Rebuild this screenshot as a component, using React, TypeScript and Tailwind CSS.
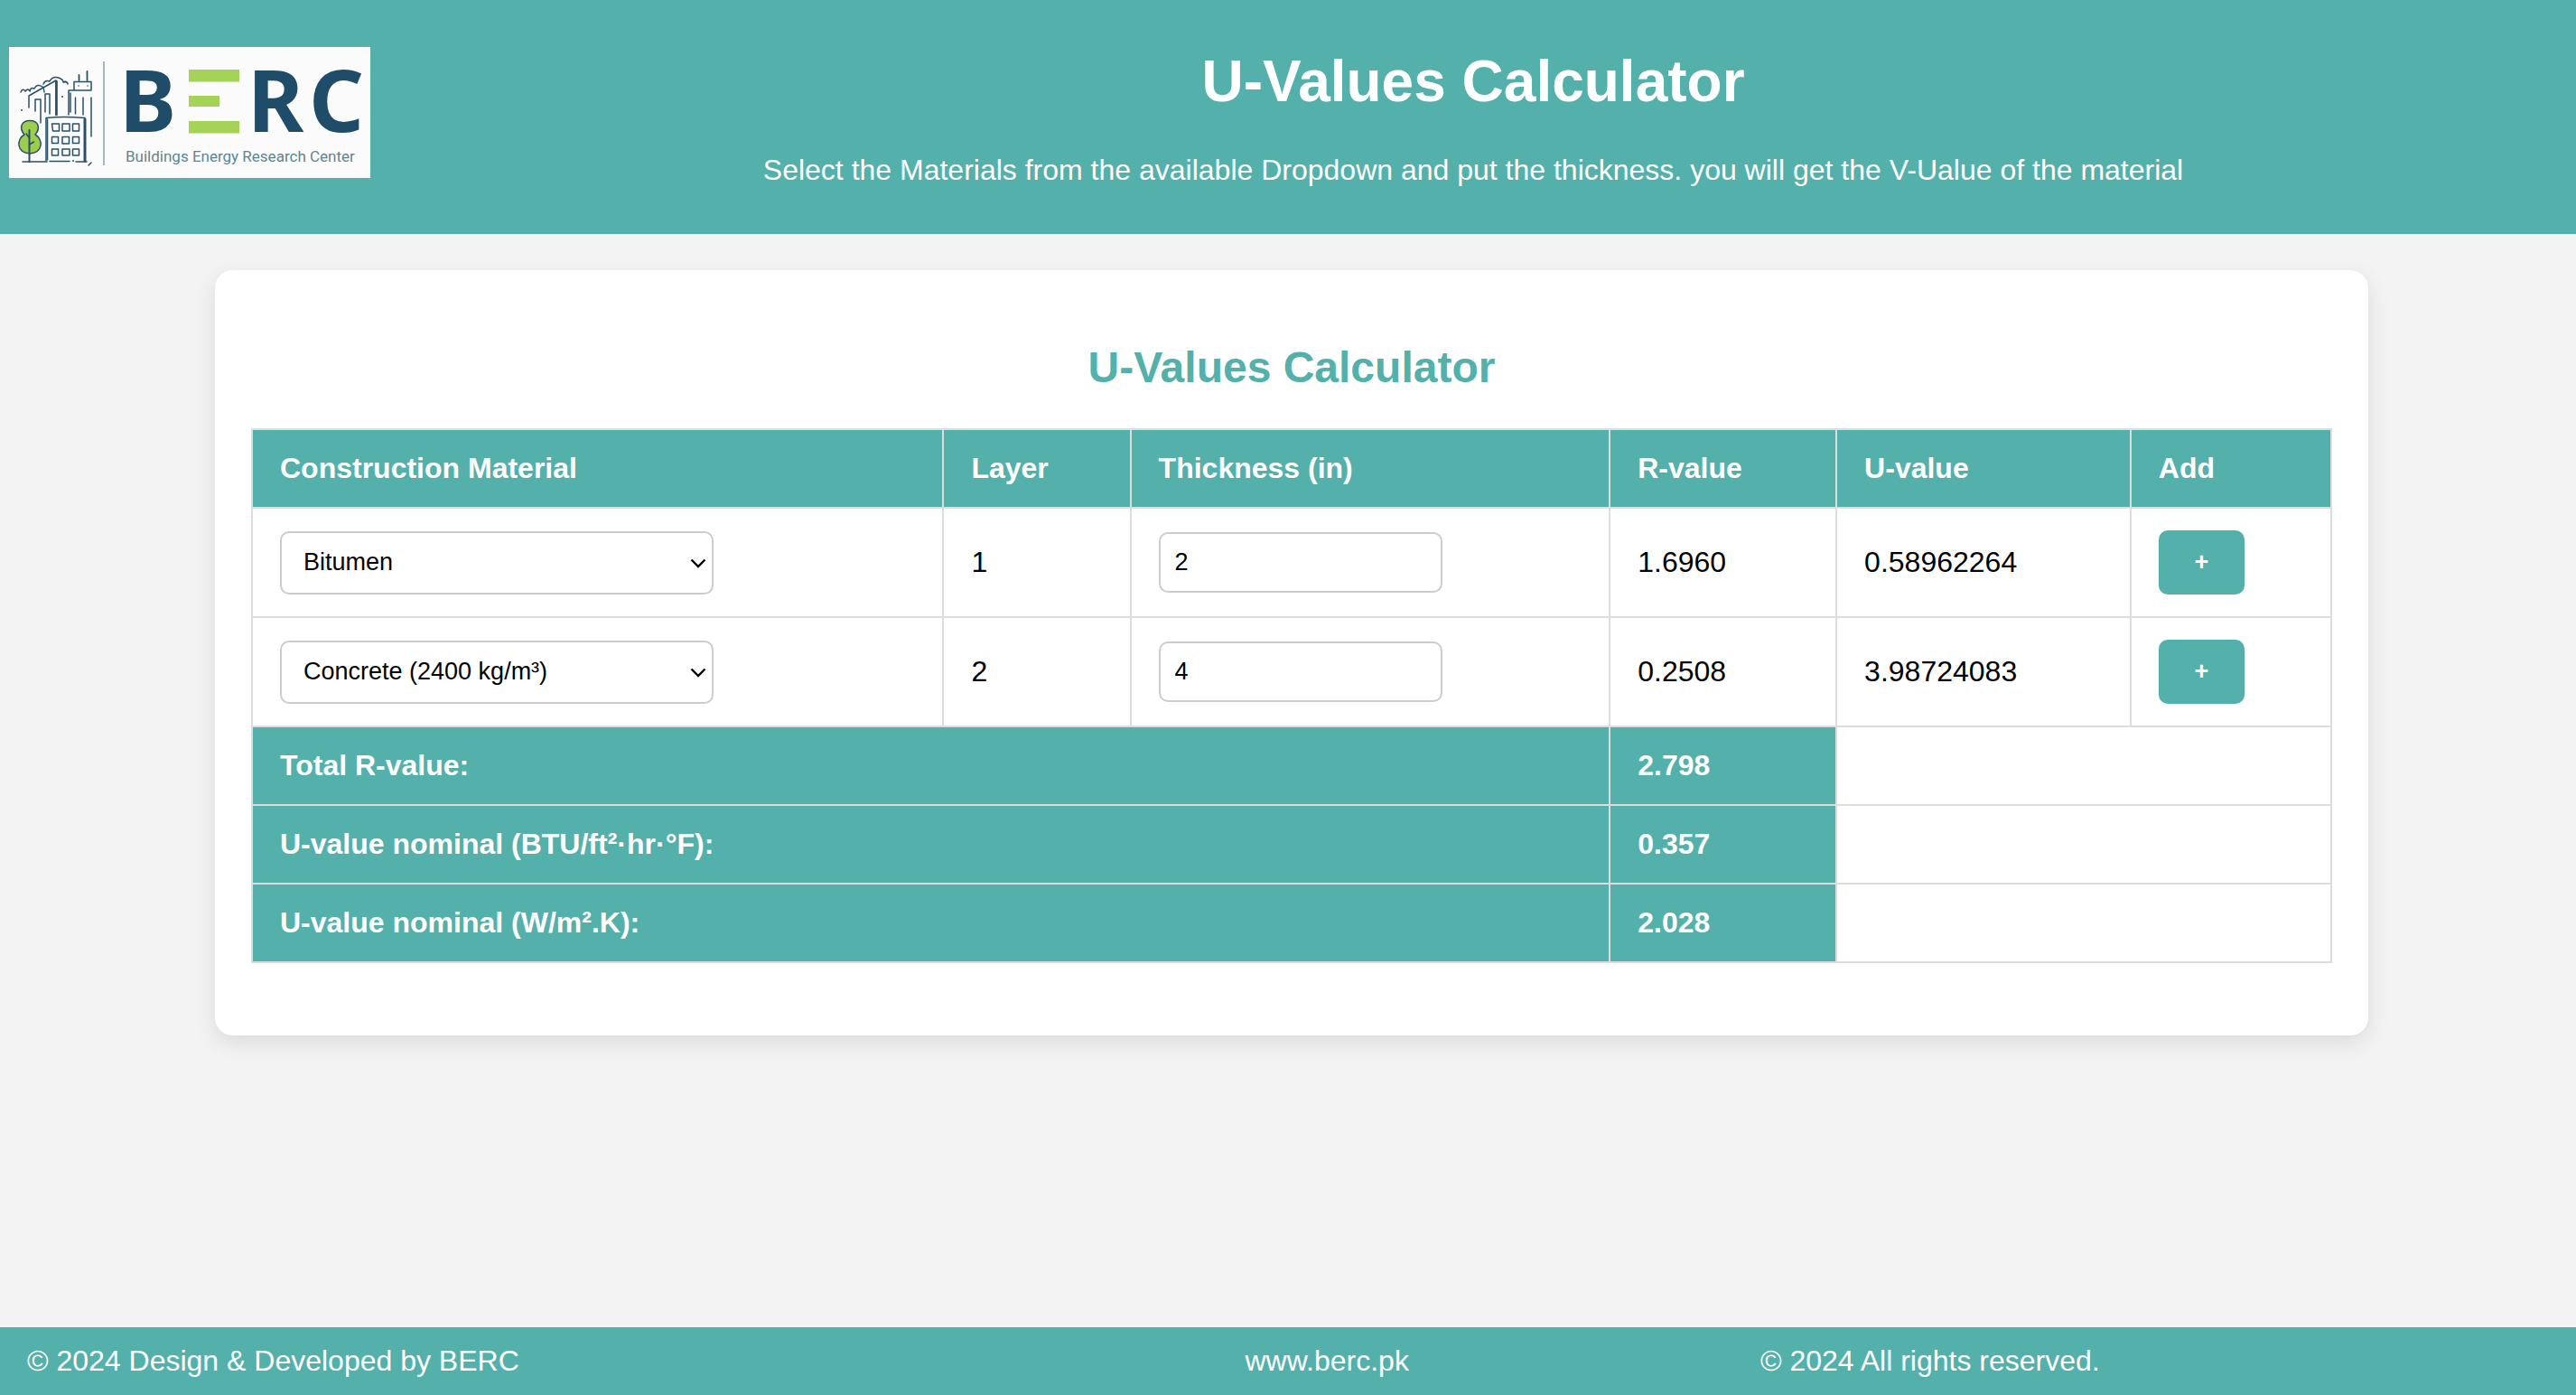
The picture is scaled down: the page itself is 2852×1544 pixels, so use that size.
import { useState } from "react";

const MATERIALS = ["Bitumen", "Concrete (2400 kg/m³)"];

type Row = { material: string; thickness: string; r: string; u: string };

const INITIAL_ROWS: Row[] = [
  { material: "Bitumen", thickness: "2", r: "1.6960", u: "0.58962264" },
  { material: "Concrete (2400 kg/m³)", thickness: "4", r: "0.2508", u: "3.98724083" },
];

const TOTALS = [
  { label: "Total R-value:", value: "2.798" },
  { label: "U-value nominal (BTU/ft²·hr·°F):", value: "0.357" },
  { label: "U-value nominal (W/m².K):", value: "2.028" },
];

const HEADINGS = ["Construction Material", "Layer", "Thickness (in)", "R-value", "U-value", "Add"];

function Logo() {
  return (
    <svg viewBox="0 0 400 145" role="img" aria-label="BERC" className="block h-auto w-[400px] shrink-0">
      <rect width="400" height="145" fill="#fbfbfc" />
      <g fill="none" stroke="#2a5068" strokeWidth="1.5" strokeLinecap="round" strokeLinejoin="round">
        <path d="M13 50q2-5 5-1q3-4 5 0q1-5 5-3q3-6 9-2q2 2 2 6" />
        <path d="M38 41q2-5 7-3q3-6 10-4q5 2 5 5q4-2 5 2M61 39q3-1 4 1" />
        <path d="M22 67V54L52 37V75" />
        <path d="M52.5 38V75" strokeWidth="2.6" />
        <path d="M29 71V58h6V84M35 60V84M40 72V52h5V74" />
        <path d="M66 75V48H91M68 51V72M72 48V38.500H91V48" />
        <path d="M77.500 37V31M86.500 37V27" strokeWidth="1.8" />
        <path d="M73.500 56V74M82 56V75M91 56V99" />
        <path d="M41 126V78.500Q60 76.500 84 78.500V126" />
        <path d="M42.500 80V125" />
        <path d="M84 80V126" strokeWidth="3" />
        <path d="M15 127h27M45 126.500h22M74 127h12M88 131l3-3" />
        <path d="M47.500 85h8v8h-7zM59 85h8v8h-8zM70.500 85h7v8h-7zM47.500 99.500h7v7h-7zM59 99.500h7.500v7.500h-7.500zM70.500 99.500h7v7h-7zM47.500 113h7v7h-7zM59 113h8v7h-8zM70.500 113h7v7h-7z" />
        <path d="M17 97C11 90 13 81.500 23 81.500S35 90 29 97C38 102 38 117 23 118C8 117 8 102 17 97Z" fill="#9bcd4e" />
        <path d="M22.500 92V127" strokeWidth="2" />
        <path d="M22 100l-3-4M22.500 108l5-3" />
      </g>
      <g fill="#2a5068">
        <circle cx="14" cy="70" r="1" />
        <circle cx="59" cy="55" r="1" />
        <circle cx="77" cy="43" r="0.8" />
        <circle cx="87" cy="43" r="0.8" />
        <circle cx="71" cy="126" r="1" />
      </g>
      <path d="M105 16V131" stroke="#8aa9b5" strokeWidth="1.6" />
      <g fill="#a4d357">
        <rect x="199" y="25" width="56" height="13.5" />
        <rect x="199" y="54" width="34" height="12" />
        <rect x="199" y="82" width="56" height="13.5" />
      </g>
      <g fill="#1f4c68" fontFamily="'Noto Sans', sans-serif" fontWeight="700" fontSize="95">
        <text x="122" y="94">B</text>
        <text x="264" y="94">R</text>
        <text x="332" y="94">C</text>
      </g>
      <text x="129" y="127" fill="#5f8590" fontFamily="Roboto, sans-serif" fontWeight="400" fontSize="17">
        Buildings Energy Research Center
      </text>
    </svg>
  );
}

export default function App() {
  const [rows, setRows] = useState(INITIAL_ROWS);
  const update = (index: number, patch: Partial<Row>) =>
    setRows(rows.map((row, i) => (i === index ? { ...row, ...patch } : row)));
  const addAfter = (index: number) =>
    setRows([...rows.slice(0, index + 1), { ...rows[index] }, ...rows.slice(index + 1)]);

  return (
    <div className="flex min-h-screen flex-col bg-[#f3f3f3] font-['Liberation_Sans',Arial,sans-serif] text-[32px] leading-[37px] text-black">
      <header className="flex items-start bg-[#54b0ab] pt-[52px] pb-[52px] pl-[10px] text-white">
        <div className="-mb-[42px] shrink-0">
          <Logo />
        </div>
        <div className="flex-1 text-center">
          <h1 className="text-[64px] leading-[76px] font-bold">U-Values Calculator</h1>
          <p className="mt-[42px]">
            Select the Materials from the available Dropdown and put the thickness. you will get the V-Ualue of the
            material
          </p>
        </div>
      </header>

      <main className="flex-1 pt-10 pb-10 pl-2">
        <section className="mx-auto w-full max-w-[2384px] rounded-[20px] bg-white px-10 py-20 shadow-[0_8px_24px_rgba(0,0,0,0.1)]">
          <h2 className="mb-10 text-center text-[48px] leading-[55px] font-bold text-[#54b0ab]">U-Values Calculator</h2>
          <table className="w-full table-fixed border-collapse text-left [&_td]:border-2 [&_td]:border-[#ddd] [&_td]:px-[30px] [&_th]:border-2 [&_th]:border-[#ddd] [&_th]:px-[30px] [&_th]:py-6">
            <colgroup>
              <col className="w-[33.25%]" />
              <col className="w-[9%]" />
              <col className="w-[23.05%]" />
              <col className="w-[10.9%]" />
              <col className="w-[14.15%]" />
              <col className="w-[9.65%]" />
            </colgroup>
            <thead className="bg-[#54b0ab] text-white">
              <tr>
                {HEADINGS.map((heading) => (
                  <th key={heading} scope="col">
                    {heading}
                  </th>
                ))}
              </tr>
            </thead>
            <tbody>
              {rows.map((row, i) => (
                <tr key={i}>
                  <td className="py-6">
                    <div className="relative w-[480px]">
                      <select
                        aria-label={`Construction material, layer ${i + 1}`}
                        value={row.material}
                        onChange={(e) => update(i, { material: e.target.value })}
                        className="block h-[70px] w-full appearance-none rounded-[10px] border-2 border-[#ccc] bg-white pr-10 pl-6 text-[27px]"
                      >
                        {MATERIALS.map((m) => (
                          <option key={m}>{m}</option>
                        ))}
                      </select>
                      <svg
                        viewBox="0 0 18 11"
                        aria-hidden="true"
                        className="pointer-events-none absolute top-[30px] right-2 w-[18px]"
                      >
                        <path d="M1.500 1.500L9 9l7.500-7.500" fill="none" stroke="#000" strokeWidth="2.4" />
                      </svg>
                    </div>
                  </td>
                  <td>{i + 1}</td>
                  <td>
                    <input
                      type="text"
                      inputMode="decimal"
                      aria-label={`Thickness in inches, layer ${i + 1}`}
                      value={row.thickness}
                      onChange={(e) => update(i, { thickness: e.target.value })}
                      className="block h-[67px] w-[314px] rounded-[10px] border-2 border-[#ccc] bg-white px-4 text-[27px]"
                    />
                  </td>
                  <td>{row.r}</td>
                  <td>{row.u}</td>
                  <td className="py-6">
                    <button
                      type="button"
                      aria-label={`Add a layer after layer ${i + 1}`}
                      onClick={() => addAfter(i)}
                      className="block h-[71px] w-[95px] rounded-[10px] bg-[#54b0ab] text-[27px] font-bold text-white"
                    >
                      +
                    </button>
                  </td>
                </tr>
              ))}
              {TOTALS.map((total) => (
                <tr key={total.label}>
                  <th scope="row" colSpan={3} className="bg-[#54b0ab] text-white">
                    {total.label}
                  </th>
                  <td className="bg-[#54b0ab] font-bold text-white">{total.value}</td>
                  <td colSpan={2}></td>
                </tr>
              ))}
            </tbody>
          </table>
        </section>
      </main>

      <footer className="grid grid-cols-[34%_34%_1fr] bg-[#54b0ab] py-[19px] pl-[30px] text-white">
        <p>© 2024 Design &amp; Developed by BERC</p>
        <a href="https://www.berc.pk" className="text-center">
          www.berc.pk
        </a>
        <p>© 2024 All rights reserved.</p>
      </footer>
    </div>
  );
}
